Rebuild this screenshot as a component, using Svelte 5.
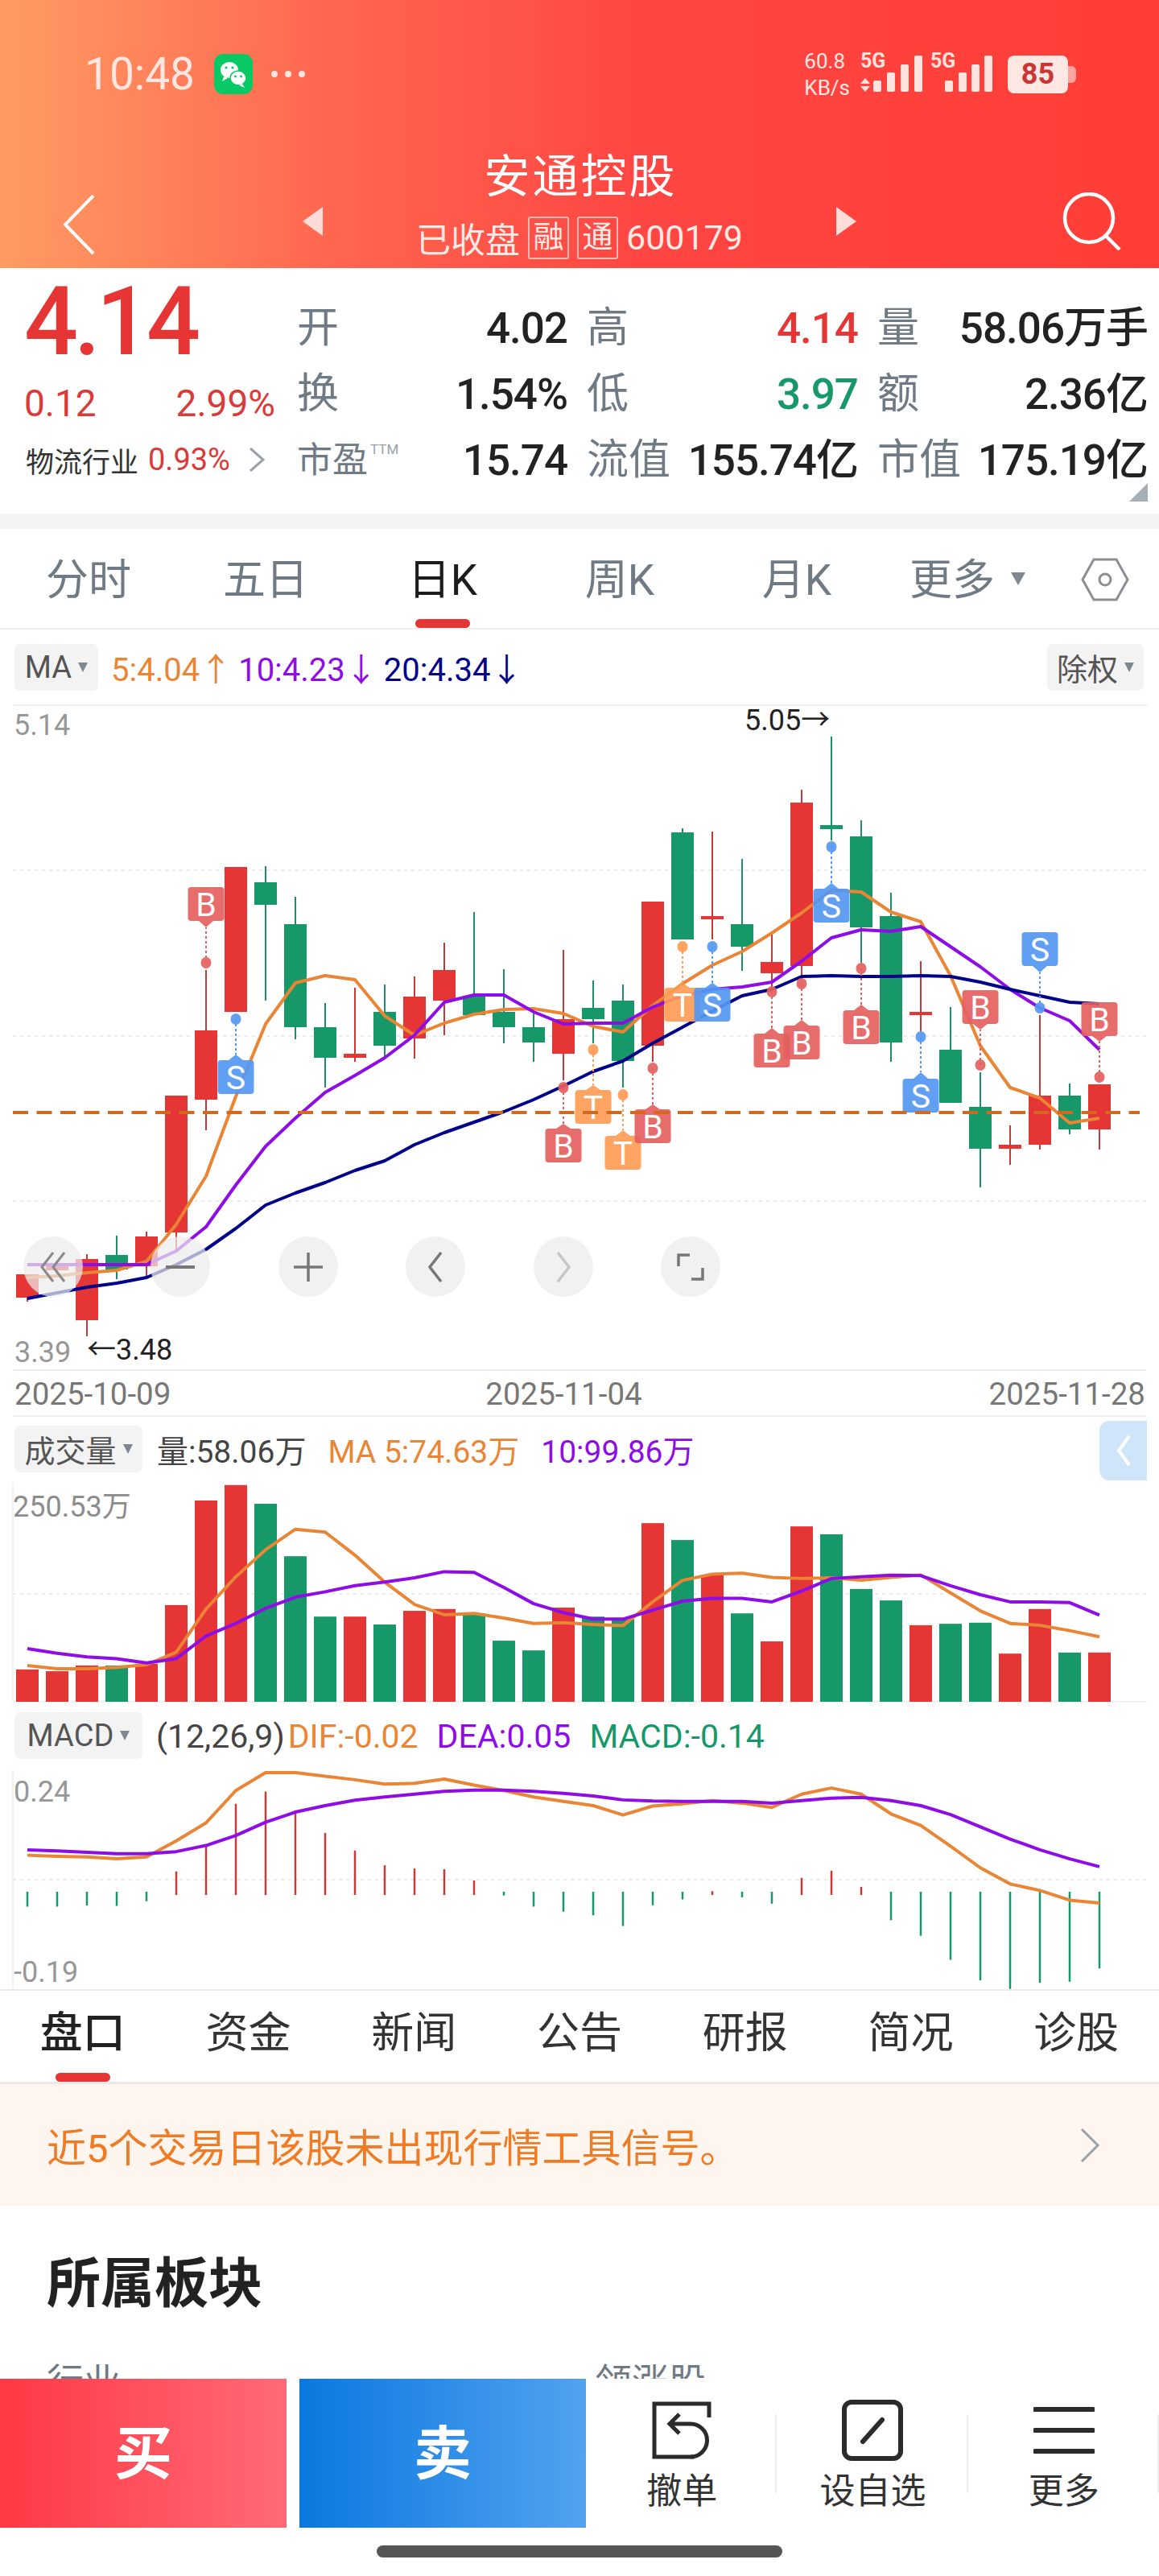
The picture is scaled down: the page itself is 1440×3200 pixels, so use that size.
<script>
	const step = 37;
	const cx = (i) => 34 + step * i;
	const poly = (ys) => ys.map((y, i) => `${cx(i)},${y}`).join(' ');

	// kind, body top, body bottom, wick top, wick bottom
	const candles = [
		['r', 1584, 1613, 1584, 1618], ['r', 1574, 1579, 1570, 1584], ['r', 1565, 1641, 1559, 1661], ['g', 1560, 1578, 1536, 1590],
		['r', 1537, 1574, 1531, 1587], ['r', 1362, 1532, 1362, 1557], ['r', 1281, 1367, 1206, 1405], ['r', 1078, 1258, 1078, 1258],
		['g', 1097, 1125, 1077, 1244], ['g', 1149, 1277, 1115, 1292], ['g', 1277, 1315, 1247, 1352], ['r', 1310, 1315, 1228, 1320],
		['g', 1258, 1300, 1224, 1316], ['r', 1239, 1291, 1214, 1316], ['r', 1206, 1244, 1172, 1287], ['g', 1238, 1262, 1134, 1262],
		['g', 1258, 1277, 1205, 1297], ['g', 1277, 1296, 1260, 1320], ['r', 1267, 1310, 1181, 1343], ['g', 1253, 1267, 1219, 1297],
		['g', 1244, 1319, 1224, 1352], ['r', 1121, 1300, 1121, 1320], ['g', 1035, 1168, 1030, 1168], ['r', 1139, 1143, 1034, 1168],
		['g', 1149, 1177, 1068, 1207], ['r', 1196, 1210, 1160, 1227], ['r', 998, 1201, 982, 1217], ['g', 1026, 1031, 916, 1045],
		['g', 1040, 1153, 1020, 1197], ['g', 1139, 1296, 1110, 1320], ['r', 1258, 1262, 1195, 1282], ['g', 1305, 1371, 1252, 1371],
		['g', 1376, 1428, 1333, 1476], ['r', 1423, 1428, 1399, 1448], ['r', 1362, 1423, 1262, 1429], ['g', 1362, 1404, 1347, 1410],
		['r', 1348, 1404, 1348, 1429]
	];

	const ma5 = [1588, 1586, 1582, 1579, 1568, 1522, 1462, 1363, 1273, 1222, 1213, 1218, 1263, 1287, 1272, 1261, 1255, 1254, 1260, 1276, 1283, 1250, 1223, 1200, 1183, 1160, 1135, 1107, 1109, 1134, 1146, 1213, 1300, 1352, 1365, 1396, 1390];
	const ma10 = [1572, 1572, 1572, 1572, 1572, 1555, 1525, 1473, 1425, 1390, 1358, 1337, 1315, 1287, 1246, 1237, 1237, 1258, 1273, 1272, 1272, 1252, 1238, 1230, 1227, 1221, 1195, 1166, 1156, 1158, 1152, 1177, 1202, 1230, 1253, 1269, 1305];
	const ma20 = [1614, 1607, 1600, 1595, 1588, 1572, 1553, 1527, 1498, 1483, 1470, 1455, 1443, 1423, 1408, 1395, 1382, 1367, 1350, 1332, 1319, 1297, 1277, 1257, 1238, 1230, 1214, 1213, 1214, 1214, 1213, 1214, 1221, 1230, 1238, 1246, 1248];

	// index, letter, rect top, pointer tip, dot y
	const tags = [
		[6, 'B', 1103, 1153, 1197], [7, 'S', 1318, 1311, 1267], [18, 'B', 1403, 1397, 1352], [19, 'T', 1355, 1349, 1305],
		[20, 'T', 1412, 1405, 1361], [21, 'B', 1379, 1373, 1328], [22, 'T', 1228, 1222, 1177], [23, 'S', 1228, 1222, 1177],
		[25, 'B', 1285, 1278, 1233], [26, 'B', 1275, 1268, 1223], [27, 'S', 1105, 1098, 1053], [28, 'B', 1256, 1249, 1204],
		[30, 'S', 1341, 1333, 1289], [32, 'B', 1231, 1280, 1324], [34, 'S', 1159, 1209, 1253], [36, 'B', 1246, 1295, 1339]
	];
	const tagW = 45;
	const tagH = 42;
	const tagClass = { B: 'buy', S: 'sell', T: 'hold' };
	function tagPointer(x, top, tip) {
		const edge = tip > top ? top + tagH : top;
		return `${x - 9},${edge} ${x},${tip} ${x + 9},${edge}`;
	}

	const vy = (z) => 1790 + z / 2.24;
	const volBars = [
		['r', 638], ['r', 643], ['r', 627], ['g', 627], ['r', 622], ['r', 459], ['r', 168], ['r', 125], ['g', 177], ['g', 323], ['g', 491], ['r', 491], ['g', 513],
		['r', 475], ['r', 470], ['g', 482], ['g', 558], ['g', 585], ['r', 466], ['g', 491], ['g', 498], ['r', 231], ['g', 278], ['r', 375], ['g', 482], ['r', 560],
		['r', 240], ['g', 262], ['g', 414], ['g', 446], ['r', 515], ['g', 511], ['g', 508], ['r', 594], ['r', 470], ['g', 591], ['r', 591]
	];
	const volMa5 = [627, 636, 636, 632, 625, 590, 470, 380, 305, 248, 256, 320, 395, 457, 486, 482, 495, 510, 508, 513, 516, 450, 390, 373, 370, 382, 385, 383, 390, 382, 375, 425, 475, 510, 515, 530, 547].map(vy);
	const volMa10 = [580, 593, 603, 608, 620, 608, 545, 510, 468, 437, 422, 405, 395, 383, 366, 368, 410, 455, 480, 498, 498, 473, 448, 440, 440, 450, 420, 385, 380, 376, 377, 405, 430, 450, 450, 452, 487].map(vy);

	const macdEnds = [1298, 1298, 1295, 1296, 1283, 1200, 1130, 1012, 978, 1030, 1093, 1142, 1183, 1192, 1194, 1225, 1267, 1298, 1312, 1322, 1352, 1294, 1278, 1255, 1272, 1290, 1218, 1198, 1243, 1336, 1379, 1446, 1503, 1527, 1510, 1507, 1470];
	const dif = [1155, 1158, 1160, 1165, 1160, 1115, 1065, 975, 925, 925, 935, 945, 957, 955, 943, 960, 975, 993, 1005, 1017, 1043, 1018, 1012, 1003, 1010, 1022, 985, 968, 985, 1040, 1072, 1130, 1190, 1235, 1253, 1280, 1288].map(vy);
	const dea = [1140, 1143, 1147, 1151, 1151, 1145, 1128, 1100, 1063, 1035, 1017, 1002, 993, 985, 977, 974, 974, 977, 983, 990, 1001, 1004, 1005, 1005, 1005, 1010, 1003, 996, 994, 1003, 1017, 1042, 1076, 1110, 1140, 1165, 1187].map(vy);

	const periods = ['分时', '五日', '日K', '周K', '月K'];
	const infoTabs = ['盘口', '资金', '新闻', '公告', '研报', '简况', '诊股'];
</script>

<div class="page">
	<header class="hero">
		<div class="status">
			<div class="status-left">
				<span class="clock">10:48</span>
				<svg class="wechat" viewBox="0 0 48 50" width="48" height="50">
					<rect width="48" height="50" rx="11" fill="#08c964" />
					<ellipse cx="19" cy="20" rx="11" ry="10" fill="#fff" />
					<path d="M12 28l-2 6 7-4z" fill="#fff" />
					<ellipse cx="30" cy="30" rx="10" ry="9" fill="#fff" stroke="#08c964" stroke-width="1.5" />
					<path d="M35 37l3 5-7-3z" fill="#fff" />
					<circle cx="15" cy="17" r="1.6" fill="#08c964" />
					<circle cx="23" cy="17" r="1.6" fill="#08c964" />
					<circle cx="26.5" cy="28" r="1.4" fill="#08c964" />
					<circle cx="33.5" cy="28" r="1.4" fill="#08c964" />
				</svg>
				<span class="more-dots"><i></i><i></i><i></i></span>
			</div>
			<div class="status-right">
				<div class="speed"><span>60.8</span><span>KB/s</span></div>
				<svg class="signal" viewBox="0 0 164 60" width="164" height="60">
					<text x="0" y="22" class="g5">5G</text>
					<path d="M0 42l6-7 6 7zM0 45h12l-6 7z" fill="#ffe3df" />
					<rect x="16" y="38" width="10" height="14" rx="2" />
					<rect x="33" y="28" width="10" height="24" rx="2" />
					<rect x="50" y="18" width="10" height="34" rx="2" />
					<rect x="67" y="7" width="10" height="45" rx="2" />
					<text x="87" y="22" class="g5">5G</text>
					<rect x="105" y="38" width="10" height="14" rx="2" />
					<rect x="122" y="28" width="10" height="24" rx="2" />
					<rect x="138" y="18" width="10" height="34" rx="2" />
					<rect x="154" y="7" width="10" height="45" rx="2" />
				</svg>
				<div class="battery"><span>85</span></div>
			</div>
		</div>
		<div class="nav">
			<svg class="back" viewBox="0 0 40 74" width="40" height="74"><path d="M38 1L3 37l35 36" fill="none" stroke="#fff" stroke-width="4" /></svg>
			<span class="tri tri-left"></span>
			<div class="name">
				<div class="title">安通控股</div>
				<div class="sub">
					<span>已收盘</span><b>融</b><b>通</b><span class="code">600179</span>
				</div>
			</div>
			<span class="tri tri-right"></span>
			<svg class="search" viewBox="0 0 74 72" width="74" height="72">
				<circle cx="33" cy="32" r="30" fill="none" stroke="#fff" stroke-width="4.5" />
				<path d="M54 54l17 17" stroke="#fff" stroke-width="4.5" />
			</svg>
		</div>
	</header>

	<section class="stats">
		<div class="quote">
			<div class="price">4.14</div>
			<div class="change"><span>0.12</span><span>2.99%</span></div>
			<div class="sector">
				<span>物流行业</span><em>0.93%</em>
				<svg viewBox="0 0 22 30" width="22" height="30"><path d="M3 1l16 14L3 29" fill="none" stroke="#9aa1a8" stroke-width="3" /></svg>
			</div>
		</div>
		<div class="fields">
			<div class="field"><span class="lbl">开</span><span>4.02</span></div>
			<div class="field"><span class="lbl">高</span><span class="up">4.14</span></div>
			<div class="field"><span class="lbl">量</span><span>58.06万手</span></div>
			<div class="field"><span class="lbl">换</span><span>1.54%</span></div>
			<div class="field"><span class="lbl">低</span><span class="down">3.97</span></div>
			<div class="field"><span class="lbl">额</span><span>2.36亿</span></div>
			<div class="field"><span class="lbl small">市盈<sup>TTM</sup></span><span>15.74</span></div>
			<div class="field"><span class="lbl">流值</span><span>155.74亿</span></div>
			<div class="field"><span class="lbl">市值</span><span>175.19亿</span></div>
		</div>
		<span class="corner"></span>
	</section>

	<div class="band"></div>

	<nav class="periods">
		{#each periods as p}
			<div class="period" class:active={p === '日K'}>{p}</div>
		{/each}
		<div class="period more-tab">更多<span class="caret large"></span></div>
		<svg class="hex" viewBox="0 0 60 54" width="60" height="54">
			<path d="M16 2h28l14 25-14 25H16L2 27z" fill="none" stroke="#8b8f94" stroke-width="3" />
			<circle cx="30" cy="27" r="7" fill="none" stroke="#8b8f94" stroke-width="3" />
		</svg>
	</nav>

	<div class="legend ma-legend">
		<div class="chip">MA<span class="caret"></span></div>
		<span class="c-orange">5:4.04↑</span>
		<span class="c-purple">10:4.23↓</span>
		<span class="c-navy">20:4.34↓</span>
		<div class="chip push">除权<span class="caret"></span></div>
	</div>

	<div class="kline">
		<svg viewBox="0 876 1440 826" width="1440" height="826">
			<path d="M16 877H1425" class="solid" />
			<path d="M16 1082H1425M16 1288H1425M16 1493H1425" class="dots" />
			{#each candles as [kind, top, bottom, wickTop, wickBottom], i}
				<line x1={cx(i)} x2={cx(i)} y1={wickTop} y2={wickBottom} class="wick-{kind}" />
				<rect x={cx(i) - 14} y={top} width="28" height={bottom - top} class="fill-{kind}" />
			{/each}
			<polyline points={poly(ma5)} class="line orange" />
			<polyline points={poly(ma10)} class="line purple" />
			<polyline points={poly(ma20)} class="line navy" />
			{#each tags as [i, letter, top, tip, dot]}
				{@const x = cx(i)}
				<g class={tagClass[letter]}>
					<line x1={x} x2={x} y1={dot} y2={tip} class="link" />
					<ellipse cx={x} cy={dot} rx="6.5" ry="7" class="tag-fill" />
					<polygon points={tagPointer(x, top, tip)} class="tag-fill" />
					<rect x={x - tagW / 2} y={top} width={tagW} height={tagH} rx="4" class="tag-fill" />
					<text x={x} y={top + 36} text-anchor="middle" class="tag-letter">{letter}</text>
				</g>
			{/each}
			<line x1="16" x2="1416" y1="1383" y2="1383" class="last-price" />
			<text x="17" y="914" class="axis">5.14</text>
			<text x="18" y="1693" class="axis">3.39</text>
			<text x="925" y="908" class="extreme">5.05→</text>
			<text x="108" y="1690" class="extreme">←3.48</text>
		</svg>
		<div class="zoom-bar">
			<button aria-label="first">
				<svg viewBox="0 0 34 38" width="34" height="38"><path d="M17 1L3 19l14 18M31 1L17 19l14 18" fill="none" stroke="#8a8a8a" stroke-width="3" /></svg>
			</button>
			<button aria-label="zoom out">
				<svg viewBox="0 0 38 38" width="38" height="38"><path d="M1 19h36" stroke="#777" stroke-width="4" /></svg>
			</button>
			<button aria-label="zoom in">
				<svg viewBox="0 0 38 38" width="38" height="38"><path d="M1 19h36M19 1v36" stroke="#777" stroke-width="3.5" /></svg>
			</button>
			<button aria-label="back">
				<svg viewBox="0 0 20 38" width="20" height="38"><path d="M17 1L3 19l14 18" fill="none" stroke="#777" stroke-width="3.5" /></svg>
			</button>
			<button aria-label="forward">
				<svg viewBox="0 0 20 38" width="20" height="38"><path d="M3 1l14 18L3 37" fill="none" stroke="#c6c6c6" stroke-width="3.5" /></svg>
			</button>
			<button aria-label="fullscreen">
				<svg viewBox="0 0 34 34" width="34" height="34"><path d="M16 2H2v14M18 32h14V18" fill="none" stroke="#777" stroke-width="3.5" /></svg>
			</button>
		</div>
	</div>

	<div class="dates"><span>2025-10-09</span><span class="mid">2025-11-04</span><span>2025-11-28</span></div>

	<div class="legend vol-legend">
		<div class="chip wide">成交量<span class="caret"></span></div>
		<span class="c-dark">量:58.06万</span>
		<span class="c-orange">MA 5:74.63万</span>
		<span class="c-purple">10:99.86万</span>
		<div class="side-tab">
			<svg viewBox="0 0 20 40" width="20" height="40"><path d="M17 2L4 20l13 18" fill="none" stroke="#fff" stroke-width="4" /></svg>
		</div>
	</div>

	<div class="sub-chart">
		<svg viewBox="0 1843 1440 273" width="1440" height="273">
			<path d="M16 1843V2115H1425" class="solid thin" />
			<path d="M16 1981H1425" class="dots" />
			{#each volBars as [kind, z], i}
				<rect x={cx(i) - 14} y={vy(z)} width="28" height={2115 - vy(z)} class="fill-{kind}" />
			{/each}
			<polyline points={poly(volMa5)} class="line orange" />
			<polyline points={poly(volMa10)} class="line purple" />
			<text x="16" y="1885" class="axis vol-max">250.53万</text>
		</svg>
	</div>

	<div class="legend macd-legend">
		<div class="chip wide">MACD<span class="caret"></span></div>
		<span class="c-dark">(12,26,9)</span>
		<span class="c-orange tight">DIF:-0.02</span>
		<span class="c-purple">DEA:0.05</span>
		<span class="c-green">MACD:-0.14</span>
	</div>

	<div class="sub-chart macd">
		<svg viewBox="0 2200 1440 272" width="1440" height="272">
			<path d="M16 2200V2471" class="solid thin" />
			<path d="M16 2336H1425" class="dots" />
			{#each macdEnds as z, i}
				{@const y = vy(z)}
				{#if y < 2352}
					<line x1={cx(i)} x2={cx(i)} y1={y} y2="2355" class="bar-r" />
				{:else}
					<line x1={cx(i)} x2={cx(i)} y1="2351" y2={y} class="bar-g" />
				{/if}
			{/each}
			<polyline points={poly(dif)} class="line orange" />
			<polyline points={poly(dea)} class="line purple" />
			<text x="17" y="2239" class="axis">0.24</text>
			<text x="17" y="2463" class="axis">-0.19</text>
		</svg>
	</div>

	<nav class="info-tabs">
		{#each infoTabs as t}
			<div class="info-tab" class:active={t === '盘口'}>{t}</div>
		{/each}
	</nav>

	<div class="notice">
		<span>近5个交易日该股未出现行情工具信号。</span>
		<svg viewBox="0 0 26 42" width="26" height="42"><path d="M3 1l20 20L3 41" fill="none" stroke="#9aa1a8" stroke-width="3" /></svg>
	</div>

	<section class="sectors">
		<h2>所属板块</h2>
		<div class="sector-heads"><span>行业</span><span>领涨股</span></div>
	</section>

	<footer class="dock">
		<div class="trade buy-btn">买</div>
		<div class="trade sell-btn">卖</div>
		<div class="actions">
			<div class="action">
				<svg viewBox="-1 -2 76 76" width="76" height="76">
					<path d="M71 20V3H3v66h50" fill="none" stroke="#2b2b2b" stroke-width="5" />
					<path d="M34 16L22 28l12 12M23 28h25a20 20 0 0 1 0 41" fill="none" stroke="#2b2b2b" stroke-width="5" />
				</svg>
				<span>撤单</span>
			</div>
			<i class="sep"></i>
			<div class="action">
				<svg viewBox="0 0 76 76" width="76" height="76">
					<rect x="3" y="3" width="70" height="70" rx="9" fill="none" stroke="#2b2b2b" stroke-width="6" />
					<path d="M50 25L26 52" stroke="#2b2b2b" stroke-width="6" stroke-linecap="round" />
				</svg>
				<span>设自选</span>
			</div>
			<i class="sep"></i>
			<div class="action">
				<svg viewBox="0 -8 76 76" width="76" height="76">
					<path d="M2 4h72M2 30h72M2 56h72" stroke="#2b2b2b" stroke-width="6" stroke-linecap="round" />
				</svg>
				<span>更多</span>
			</div>
			<i class="sep"></i>
		</div>
	</footer>
	<div class="home-bar"></div>
</div>

<style>
	:global(body) {
		margin: 0;
		background: #fff;
	}

	.page {
		position: relative;
		width: 1440px;
		height: 3200px;
		overflow: hidden;
		background: #fff;
		color: #222;
		font-family: Roboto, "Noto Sans CJK SC", sans-serif;
	}

	/* Header */
	.hero {
		height: 333px;
		box-sizing: border-box;
		padding-top: 62px;
		background: linear-gradient(90deg, #ff9b63 0%, #ff6750 28%, #ff4643 55%, #ff3d36 100%);
		color: #fff;
	}

	.status {
		display: flex;
		justify-content: space-between;
		height: 60px;
		padding: 0 113px 0 105px;
	}

	.status-left,
	.status-right {
		display: flex;
		align-items: center;
	}

	.clock {
		font-size: 55px;
		color: #ffe6e0;
		line-height: 60px;
	}

	.wechat {
		margin-left: 24px;
	}

	.more-dots {
		display: flex;
		gap: 9px;
		margin-left: 23px;
	}

	.more-dots i {
		width: 8px;
		height: 8px;
		border-radius: 50%;
		background: #ffe6e0;
	}

	.speed {
		display: flex;
		flex-direction: column;
		gap: 13px;
		font-size: 26px;
		line-height: 20px;
		color: #ffe6e0;
		margin-right: 13px;
	}

	.signal rect {
		fill: #ffe3df;
	}

	.g5 {
		font-size: 25px;
		font-weight: 700;
		fill: #ffe3df;
	}

	.battery {
		position: relative;
		width: 75px;
		height: 47px;
		margin-left: 19px;
		background: #ffe8e4;
		border-radius: 8px;
		text-align: center;
		line-height: 47px;
		font-size: 36px;
		font-weight: 700;
		color: #c93634;
	}

	.battery::after {
		content: '';
		position: absolute;
		top: 13px;
		right: -10px;
		width: 10px;
		height: 21px;
		background: rgba(255, 232, 228, 0.6);
		border-radius: 0 6px 6px 0;
	}

	.nav {
		display: grid;
		grid-template-columns: 376px 25px 1fr 25px 376px;
		align-items: center;
		margin-top: 65px;
		height: 140px;
	}

	.back {
		margin-left: 78px;
		margin-top: 44px;
	}

	.tri {
		width: 0;
		height: 0;
		margin-top: 36px;
		border-top: 18px solid transparent;
		border-bottom: 18px solid transparent;
	}

	.tri-left {
		border-right: 25px solid #ffdcd8;
	}

	.tri-right {
		border-left: 25px solid #ffdcd8;
	}

	.name {
		text-align: center;
	}

	.title {
		font-size: 57px;
		line-height: 60px;
		letter-spacing: 3px;
		margin-right: -3px;
	}

	.sub {
		display: flex;
		justify-content: center;
		align-items: center;
		gap: 10px;
		height: 58px;
		margin-top: 16px;
		font-size: 43px;
		color: #ffeae6;
	}

	.sub b {
		width: 47px;
		height: 49px;
		border: 2px solid #ffb9b0;
		border-radius: 3px;
		font-weight: 400;
		font-size: 38px;
		line-height: 47px;
		text-align: center;
	}

	.search {
		justify-self: end;
		margin-right: 46px;
		margin-top: 36px;
	}

	/* Quote block */
	.stats {
		position: relative;
		display: flex;
		height: 305px;
		box-sizing: border-box;
	}

	.quote {
		width: 372px;
		box-sizing: border-box;
		padding-left: 30px;
	}

	.price {
		height: 126px;
		font-size: 118px;
		line-height: 134px;
		font-weight: 500;
		letter-spacing: -5px;
		color: #e53535;
	}

	.change {
		display: flex;
		justify-content: space-between;
		width: 312px;
		margin-top: 17px;
		font-size: 46px;
		line-height: 50px;
		color: #d93a3a;
	}

	.sector {
		display: flex;
		align-items: center;
		height: 44px;
		margin: 23px 0 0 2px;
		font-size: 35px;
		color: #333;
	}

	.sector em {
		font-style: normal;
		font-size: 38px;
		color: #d93a3a;
		margin-left: 12px;
	}

	.sector svg {
		margin-left: 22px;
	}

	.fields {
		display: grid;
		grid-template-columns: 333px 334px 333px;
		column-gap: 27px;
		grid-auto-rows: 82px;
		align-items: center;
		margin-top: 34px;
	}

	.field {
		display: flex;
		justify-content: space-between;
		align-items: center;
		font-size: 53px;
		line-height: 60px;
		font-weight: 500;
		color: #222;
		white-space: nowrap;
		letter-spacing: -1px;
	}

	.lbl {
		position: relative;
		margin-left: -3px;
		font-size: 52px;
		font-weight: 400;
		color: #6f7a85;
		letter-spacing: 0;
	}

	.lbl.small {
		font-size: 44px;
	}

	.field sup {
		position: absolute;
		left: 100%;
		top: 6px;
		margin-left: 3px;
		font-size: 17px;
		line-height: 20px;
		color: #9aa1a8;
	}

	.up {
		color: #e53535;
	}

	.down {
		color: #179868;
	}

	.corner {
		position: absolute;
		right: 14px;
		top: 267px;
		border-left: 23px solid transparent;
		border-bottom: 23px solid #a7b0b8;
	}

	.band {
		height: 19px;
		background: #f4f4f4;
	}

	/* Period tabs */
	.periods {
		position: relative;
		display: flex;
		height: 125px;
		box-sizing: border-box;
		border-bottom: 2px solid #eee;
	}

	.period {
		position: relative;
		width: 220px;
		padding-top: 29px;
		text-align: center;
		font-size: 53px;
		line-height: 70px;
		color: #6f7a85;
	}

	.period.active {
		color: #1c1c1c;
	}

	.period.active::after {
		content: '';
		position: absolute;
		left: 76px;
		bottom: 0;
		width: 68px;
		height: 11px;
		border-radius: 6px;
		background: #e53535;
	}

	.more-tab {
		width: auto;
		margin-left: 30px;
	}

	.hex {
		position: absolute;
		right: 37px;
		top: 36px;
	}

	.caret {
		display: inline-block;
		margin-left: 8px;
		vertical-align: 6px;
		border-left: 6px solid transparent;
		border-right: 6px solid transparent;
		border-top: 12px solid #7f8890;
	}

	.caret.large {
		margin-left: 20px;
		vertical-align: 12px;
		border-left-width: 9px;
		border-right-width: 9px;
		border-top-width: 16px;
	}

	/* Indicator legends */
	.legend {
		display: flex;
		align-items: center;
		gap: 18px;
		height: 93px;
		padding: 0 19px 0 18px;
		box-sizing: border-box;
		font-size: 40px;
		white-space: nowrap;
	}

	.ma-legend {
		gap: 8px;
	}

	.ma-legend .chip:first-child {
		margin-right: 8px;
	}

	.chip {
		display: flex;
		align-items: center;
		justify-content: center;
		width: 104px;
		height: 58px;
		border-radius: 7px;
		background: #f3f3f3;
		color: #555;
		font-size: 38px;
	}

	.chip.wide {
		width: 159px;
	}

	.chip.push {
		margin-left: auto;
		width: 120px;
	}

	.c-orange {
		color: #ea8535;
	}

	.c-purple {
		color: #8e0ce6;
	}

	.c-navy {
		color: #00008b;
	}

	.c-dark {
		color: #444;
	}

	.c-green {
		color: #17986a;
	}

	.tight {
		margin-left: -19px;
	}

	.kline {
		position: relative;
		height: 826px;
	}

	svg {
		display: block;
	}

	.solid {
		fill: none;
		stroke: #eee;
		stroke-width: 2;
	}

	.solid.thin {
		stroke-width: 1.5;
	}

	.dots {
		fill: none;
		stroke: #ececec;
		stroke-width: 2;
		stroke-dasharray: 4 5;
	}

	.fill-r {
		fill: #e53535;
	}

	.fill-g {
		fill: #179868;
	}

	.wick-r {
		stroke: #c83a3a;
		stroke-width: 2;
	}

	.wick-g {
		stroke: #1d8f68;
		stroke-width: 2;
	}

	.line {
		fill: none;
		stroke-width: 4;
		stroke-linejoin: round;
	}

	.orange {
		stroke: #ea8535;
	}

	.purple {
		stroke: #8e0ce6;
	}

	.navy {
		stroke: #00008b;
	}

	.buy {
		--tag: #e55f5f;
	}

	.sell {
		--tag: #5497f2;
	}

	.hold {
		--tag: #ff9c55;
	}

	.tag-fill {
		fill: var(--tag);
		fill-opacity: 0.92;
	}

	.link {
		stroke: var(--tag);
		stroke-width: 2;
		stroke-dasharray: 3 3;
	}

	.tag-letter {
		fill: #fff;
		font-size: 41px;
	}

	.last-price {
		stroke: #d2691e;
		stroke-width: 4;
		stroke-dasharray: 19 10.5;
	}

	.axis {
		fill: #979797;
		font-size: 36px;
	}

	.vol-max {
		fill: #8c8c8c;
	}

	.extreme {
		fill: #222;
		font-size: 36px;
	}

	.zoom-bar {
		position: absolute;
		left: 29px;
		top: 661px;
		display: flex;
		gap: 84.4px;
	}

	.zoom-bar button {
		display: flex;
		align-items: center;
		justify-content: center;
		width: 74px;
		height: 75px;
		padding: 0;
		border: 0;
		border-radius: 50%;
		background: rgba(236, 236, 236, 0.72);
	}

	.dates {
		display: flex;
		justify-content: space-between;
		height: 59px;
		box-sizing: border-box;
		margin: 0 16px;
		padding: 0 1px 0 2px;
		border-top: 2px solid #eee;
		border-bottom: 2px solid #eee;
		font-size: 38.5px;
		line-height: 57px;
		color: #777;
	}

	.dates .mid {
		margin-right: 40px;
	}

	.vol-legend {
		position: relative;
		height: 82px;
		padding-bottom: 3px;
		gap: 27px;
		font-size: 39px;
	}

	.vol-legend .chip {
		margin-right: -9px;
	}

	.side-tab {
		position: absolute;
		right: 15px;
		top: 5px;
		display: flex;
		align-items: center;
		justify-content: center;
		width: 59px;
		height: 74px;
		border-radius: 12px 0 0 12px;
		background: #cfe5f9;
	}

	.sub-chart {
		height: 273px;
	}

	.macd-legend {
		height: 84px;
		padding-bottom: 0;
		gap: 23px;
		font-size: 41px;
	}

	.macd-legend .chip {
		margin: -3px -6px 0 0;
	}

	.sub-chart.macd {
		height: 272px;
	}

	.bar-r {
		stroke: #c83a3a;
		stroke-width: 2.5;
	}

	.bar-g {
		stroke: #179868;
		stroke-width: 2.5;
	}

	/* Lower tabs */
	.info-tabs {
		display: grid;
		grid-template-columns: repeat(7, 1fr);
		height: 118px;
		box-sizing: border-box;
		border-top: 2px solid #eaeaea;
		border-bottom: 3px solid #e8e8e8;
	}

	.info-tab {
		position: relative;
		padding-top: 18px;
		text-align: center;
		font-size: 53px;
		line-height: 70px;
		color: #333;
	}

	.info-tab.active {
		color: #222;
		font-weight: 500;
	}

	.info-tab.active::after {
		content: '';
		position: absolute;
		left: 69px;
		bottom: 0;
		width: 68px;
		height: 11px;
		border-radius: 6px;
		background: #e53535;
	}

	.notice {
		display: flex;
		align-items: center;
		justify-content: space-between;
		height: 151px;
		padding: 0 73px 0 58px;
		background: #fff5ef;
		font-size: 49px;
		color: #ef7b24;
	}

	.sectors {
		padding: 52px 58px 0;
	}

	.sectors h2 {
		margin: 0;
		font-size: 67px;
		line-height: 90px;
		font-weight: 700;
		color: #222;
	}

	.sector-heads {
		display: flex;
		margin-top: 47px;
		font-size: 46px;
		line-height: 60px;
		color: #6f7a85;
	}

	.sector-heads span {
		flex: none;
		width: 681px;
	}

	/* Bottom dock */
	.dock {
		position: absolute;
		left: 0;
		right: 0;
		top: 2955px;
		height: 245px;
		display: flex;
		align-items: flex-start;
		gap: 16px;
		background: #fff;
	}

	.trade {
		width: 356px;
		height: 185px;
		flex: none;
		font-size: 72px;
		line-height: 188px;
		text-align: center;
		font-weight: 700;
		color: #fff;
	}

	.buy-btn {
		background: linear-gradient(90deg, #ff3845, #ff6a76);
	}

	.sell-btn {
		background: linear-gradient(90deg, #0a78df, #52a2f0);
	}

	.actions {
		flex: 1;
		display: flex;
		align-items: center;
		height: 185px;
		margin-left: -16px;
	}

	.action {
		flex: 1;
		display: flex;
		flex-direction: column;
		align-items: center;
		justify-content: space-between;
		height: 142px;
		padding-left: 3px;
		font-size: 44px;
		line-height: 48px;
		color: #333;
	}

	.action svg {
		margin-top: 4px;
	}

	.sep {
		width: 2px;
		height: 98px;
		background: #eee;
	}

	.home-bar {
		position: absolute;
		left: 468px;
		top: 3162px;
		width: 504px;
		height: 15px;
		border-radius: 8px;
		background: #555;
	}
</style>
